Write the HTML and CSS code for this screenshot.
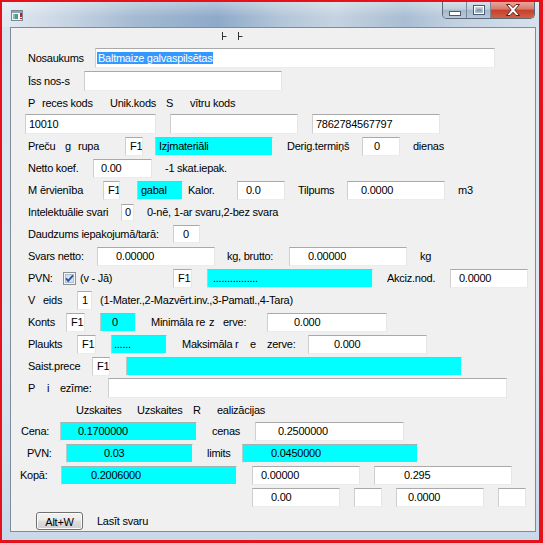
FILE: index.html
```html
<!DOCTYPE html>
<html lang="lv">

<head>
    <meta charset="UTF-8">
    <meta name="viewport" content="width=device-width, initial-scale=1.0">
    <title>Prece</title>
    <link rel="stylesheet" href="styles.css">
</head>

<body>
    <div class="screen">
        <div class="titlebar">
            <svg class="app-icon" width="13" height="11" viewBox="0 0 13 11">
                <rect x="0.5" y="0.5" width="11" height="10" fill="#f4f6f8" stroke="#7b8794" />
                <rect x="1" y="1" width="10" height="2" fill="#8fa3b8" />
                <rect x="2" y="4" width="5" height="5" fill="#4f9a86" />
                <rect x="2" y="4" width="2" height="5" fill="#7cc0a6" />
                <rect x="9" y="3" width="2" height="4" fill="#b3221c" />
                <rect x="9" y="8" width="2" height="1" fill="#b3221c" />
            </svg>
            <div class="caption-btns">
                <div class="cbtn cmin">
                    <svg width="12" height="6" viewBox="0 0 12 6"><rect x="0.5" y="1.5" width="11" height="4" fill="#fff" stroke="#4b5b6d" /></svg>
                </div>
                <div class="cbtn cmax">
                    <svg width="12" height="10" viewBox="0 0 12 10"><rect x="0.5" y="0.5" width="11" height="9" fill="none" stroke="#4b5b6d" /><rect x="1.5" y="1.5" width="9" height="7" fill="none" stroke="#fff" /><rect x="3.5" y="3.5" width="5" height="3" fill="#4b5b6d" opacity=".35" /></svg>
                </div>
                <div class="cbtn cclose">
                    <svg width="16" height="12" viewBox="0 0 16 12"><path d="M1.5 0.5h3.5l3 3.2 3-3.2h3.5l-4.7 5.5 4.7 5.5h-3.5l-3-3.2-3 3.2h-3.5l4.7-5.5z" fill="#fff" stroke="#6b1a12" stroke-width="1" /></svg>
                </div>
            </div>
        </div>

        <div class="client">
            <div class="splitter">
                <svg width="5" height="8" viewBox="0 0 5 8"><path d="M0.5 0v8M0.5 4.5h4" stroke="#333" /></svg>
                <svg width="5" height="8" viewBox="0 0 5 8"><path d="M0.5 0v8M0.5 4.5h4" stroke="#333" /></svg>
            </div>

            <div class="row">
                <span class="lbl w67">Nosaukums</span>
                <div class="fld h20 w400 pl1"><span class="sel">Baltmaize galvaspilsētas</span></div>
            </div>

            <div class="row mt1">
                <span class="lbl w56">Īss nos-s</span>
                <div class="fld h20 w198"></div>
            </div>

            <div class="row h21">
                <span class="lbl w14">P</span>
                <span class="lbl w68">reces kods</span>
                <span class="lbl w56">Unik.kods</span>
                <span class="lbl w24">S</span>
                <span class="lbl">vītru kods</span>
            </div>

            <div class="row">
                <div class="fld h20 w131 pl3 ml-3">10010</div>
                <div class="fld h20 w128 ml14"></div>
                <div class="fld h20 w128 pl3 ml14">7862784567797</div>
            </div>

            <div class="row">
                <span class="lbl w37">Preču</span>
                <span class="lbl w13">g</span>
                <span class="lbl w47">rupa</span>
                <div class="fld f1 w18">F1</div>
                <div class="fld cy w118 pl3 ml12">Izjmateriāli</div>
                <span class="lbl w75 ml14">Derig.termiņš</span>
                <div class="fld w38 pl11">0</div>
                <span class="lbl ml13">dienas</span>
            </div>

            <div class="row">
                <span class="lbl w65">Netto koef.</span>
                <div class="fld w59 pl7">0.00</div>
                <span class="lbl ml13">-1 skat.iepak.</span>
            </div>

            <div class="row">
                <span class="lbl w12">M</span>
                <span class="lbl w63">ērvienība</span>
                <div class="fld f1 w17">F1</div>
                <div class="fld cy w46 pl3 ml17">gabal</div>
                <span class="lbl w49 ml5">Kalor.</span>
                <div class="fld w48 pl8">0.0</div>
                <span class="lbl w49 ml13">Tilpums</span>
                <div class="fld w98 pl13">0.0000</div>
                <span class="lbl ml13">m3</span>
            </div>

            <div class="row">
                <span class="lbl w93">Intelektuālie svari</span>
                <div class="fld h17 w13 pl3">0</div>
                <span class="lbl ml13">0-nē, 1-ar svaru,2-bez svara</span>
            </div>

            <div class="row">
                <span class="lbl w145">Daudzums iepakojumā/tarā:</span>
                <div class="fld h18 w27 pl9">0</div>
            </div>

            <div class="row">
                <span class="lbl w69">Svars netto:</span>
                <div class="fld w118 pl18">0.00000</div>
                <span class="lbl w62 ml12">kg, brutto:</span>
                <div class="fld w118 pl18">0.00000</div>
                <span class="lbl ml13">kg</span>
            </div>

            <div class="row">
                <span class="lbl w35">PVN:</span>
                <svg class="check" width="13" height="13" viewBox="0 0 13 13">
                    <rect x="0.5" y="0.5" width="12" height="12" fill="#f6f6f6" stroke="#8e8f8f" />
                    <rect x="2.5" y="2.5" width="8" height="8" fill="#d3e2f1" stroke="#a9bfd8" />
                    <path d="M3 6.3l2.2 2.6 4.8-5.6" fill="none" stroke="#2c4f9e" stroke-width="1.8" />
                </svg>
                <span class="lbl w93 ml4">(v - Jā)</span>
                <div class="fld f1 w19">F1</div>
                <div class="fld cy w166 pl5 ml15">................</div>
                <span class="lbl w63 ml14">Akciz.nod.</span>
                <div class="fld w78 pl8">0.0000</div>
            </div>

            <div class="row">
                <span class="lbl w15">V</span>
                <span class="lbl w34">eids</span>
                <div class="fld w15 pl4">1</div>
                <span class="lbl ml8">(1-Mater.,2-Mazvērt.inv.,3-Pamatl.,4-Tara)</span>
            </div>

            <div class="row">
                <span class="lbl w38">Konts</span>
                <div class="fld f1 w19">F1</div>
                <div class="fld cy w36 pl11 ml15">0</div>
                <span class="lbl w58 ml15">Minimāla re</span>
                <span class="lbl w14">z</span>
                <span class="lbl w44">erve:</span>
                <div class="fld w120 pl26">0.000</div>
            </div>

            <div class="row">
                <span class="lbl w49">Plaukts</span>
                <div class="fld f1 w19">F1</div>
                <div class="fld cy w56 pl2 ml15">......</div>
                <span class="lbl w68 ml15">Maksimāla r</span>
                <span class="lbl w17">e</span>
                <span class="lbl w41">zerve:</span>
                <div class="fld w119 pl25">0.000</div>
            </div>

            <div class="row">
                <span class="lbl w64">Saist.prece</span>
                <div class="fld f1 w18">F1</div>
                <div class="fld cy w336 ml16"></div>
            </div>

            <div class="row">
                <span class="lbl w19">P</span>
                <span class="lbl w13">i</span>
                <span class="lbl w48">ezīme:</span>
                <div class="fld h20 w399"></div>
            </div>

            <div class="row h21">
                <span class="lbl w61 ml48">Uzskaites</span>
                <span class="lbl w56">Uzskaites</span>
                <span class="lbl w24">R</span>
                <span class="lbl">ealizācijas</span>
            </div>

            <div class="row">
                <span class="lbl w39 ml-7">Cena:</span>
                <div class="fld cy w137 pl17">0.1700000</div>
                <span class="lbl w43 ml15">cenas</span>
                <div class="fld w149 pl22">0.2500000</div>
            </div>

            <div class="row">
                <span class="lbl w39 ml-1">PVN:</span>
                <div class="fld cy w127 pl37">0.03</div>
                <span class="lbl w35 ml14">limits</span>
                <div class="fld cy w176 pl28">0.0450000</div>
            </div>

            <div class="row">
                <span class="lbl w41 ml-8">Kopā:</span>
                <div class="fld cy w176 pl29">0.2006000</div>
                <div class="fld w108 pl8 ml15">0.00000</div>
                <div class="fld w138 pl29 ml14">0.295</div>
            </div>

            <div class="row">
                <div class="fld w88 pl18 ml224">0.00</div>
                <div class="fld w28 ml14"></div>
                <div class="fld w88 pl11 ml14">0.0000</div>
                <div class="fld w28 ml14"></div>
            </div>

            <div class="row h20 mt3">
                <button class="btn ml8">Alt+W</button>
                <span class="lbl ml14">Lasīt svaru</span>
            </div>
        </div>
    </div>
</body>

</html>
```

FILE: styles.css
```css
* {
    margin: 0;
    padding: 0;
    box-sizing: border-box;
}

body {
    font: 11px "Liberation Sans", Arial, sans-serif;
    letter-spacing: -0.25px;
    color: #000;
    background: #fff;
}

.screen {
    width: 543px;
    height: 543px;
    border: solid #e5121c;
    border-width: 2px 4px 3px 2px;
    display: flex;
    flex-direction: column;
    overflow: hidden;
    background: linear-gradient(180deg, #d9e4ef 0%, #dfe8f1 60%, #c9d9e9 100%);
}

/* window caption */
.titlebar {
    height: 25px;
    flex: none;
    display: flex;
    align-items: flex-start;
    background:
        linear-gradient(180deg, rgba(255, 255, 255, .35) 0%, rgba(255, 255, 255, 0) 60%),
        linear-gradient(90deg, #e3eaf2 0%, #c7d5e3 12%, #a3bad2 25%, #8eaac9 40%, #b3c6d9 52%, #c5d3e1 62%, #a9bed3 75%, #c3d2e1 85%, #d6e1ec 100%);
}

.app-icon {
    margin: 8px 0 0 9px;
}

.caption-btns {
    margin-left: auto;
    margin-right: 4px;
    display: flex;
    height: 17px;
    border: 1px solid #5a6878;
    border-top: none;
    border-radius: 0 0 5px 5px;
    overflow: hidden;
}

.cbtn {
    height: 100%;
    display: flex;
    align-items: center;
    justify-content: center;
}

.cmin,
.cmax {
    width: 24px;
    background: linear-gradient(180deg, #d5e0ea 0%, #c0cfdd 45%, #a6b9cc 50%, #b6c8da 100%);
    border-right: 1px solid #7a8899;
}

.cmin svg {
    margin-top: 5px;
}

.cclose {
    width: 43px;
    background: linear-gradient(180deg, #e7a89b 0%, #d9796a 45%, #c4402c 50%, #d2603f 100%);
}

/* form area */
.client {
    flex: 1;
    margin: 0 3px 8px 8px;
    border: 1px solid #7f8b98;
    background: #f0f0f0;
    display: flex;
    flex-direction: column;
    overflow: hidden;
}

.splitter {
    height: 19px;
    flex: none;
    display: flex;
    gap: 11px;
    padding: 4px 0 0 211px;
}

.row {
    display: flex;
    align-items: center;
    height: 22px;
    flex: none;
    padding-left: 17px;
}

.lbl {
    flex: none;
    white-space: nowrap;
}

.fld {
    flex: none;
    height: 19px;
    line-height: 17px;
    white-space: nowrap;
    overflow: hidden;
    background: #fff;
    border: 1px solid;
    border-color: #a9a9a9 #e6e6e6 #ececec #cfcfcf;
}

.fld.cy {
    background: #00ffff;
    border-color: #a3b3b3 #e6f6f6 #f0f0f0 #b8cccc;
}

.fld.f1 {
    padding-left: 4px;
}

.sel {
    background: #3399ff;
    color: #fff;
    padding: 0 1px;
}

.check {
    flex: none;
}

.btn {
    flex: none;
    width: 47px;
    height: 18px;
    font: inherit;
    letter-spacing: inherit;
    color: #000;
    border: 1px solid #707070;
    border-radius: 3px;
    background: linear-gradient(180deg, #f2f2f2 0%, #ebebeb 45%, #dddddd 50%, #cfcfcf 100%);
    box-shadow: inset 0 0 0 1px #fcfcfc;
}

/* row heights */
.h17 { height: 17px; line-height: 15px; }
.h18 { height: 18px; line-height: 16px; }
.h20 { height: 20px; line-height: 18px; }
.row.h20 { height: 20px; }
.row.h21 { height: 21px; }
.mt1 { margin-top: 1px; }
.mt3 { margin-top: 3px; }

/* widths */
.w12 { width: 12px; }
.w13 { width: 13px; }
.w14 { width: 14px; }
.w15 { width: 15px; }
.w17 { width: 17px; }
.w18 { width: 18px; }
.w19 { width: 19px; }
.w24 { width: 24px; }
.w27 { width: 27px; }
.w28 { width: 28px; }
.w34 { width: 34px; }
.w35 { width: 35px; }
.w36 { width: 36px; }
.w37 { width: 37px; }
.w38 { width: 38px; }
.w39 { width: 39px; }
.w41 { width: 41px; }
.w43 { width: 43px; }
.w44 { width: 44px; }
.w46 { width: 46px; }
.w47 { width: 47px; }
.w48 { width: 48px; }
.w49 { width: 49px; }
.w56 { width: 56px; }
.w58 { width: 58px; }
.w59 { width: 59px; }
.w61 { width: 61px; }
.w62 { width: 62px; }
.w63 { width: 63px; }
.w64 { width: 64px; }
.w65 { width: 65px; }
.w67 { width: 67px; }
.w68 { width: 68px; }
.w69 { width: 69px; }
.w75 { width: 75px; }
.w78 { width: 78px; }
.w88 { width: 88px; }
.w93 { width: 93px; }
.w98 { width: 98px; }
.w108 { width: 108px; }
.w118 { width: 118px; }
.w119 { width: 119px; }
.w120 { width: 120px; }
.w127 { width: 127px; }
.w128 { width: 128px; }
.w131 { width: 131px; }
.w137 { width: 137px; }
.w138 { width: 138px; }
.w145 { width: 145px; }
.w149 { width: 149px; }
.w166 { width: 166px; }
.w176 { width: 176px; }
.w198 { width: 198px; }
.w336 { width: 336px; }
.w399 { width: 399px; }
.w400 { width: 400px; }

/* left gaps */
.ml-8 { margin-left: -8px; }
.ml-7 { margin-left: -7px; }
.ml-3 { margin-left: -3px; }
.ml-1 { margin-left: -1px; }
.ml4 { margin-left: 4px; }
.ml5 { margin-left: 5px; }
.ml8 { margin-left: 8px; }
.ml12 { margin-left: 12px; }
.ml13 { margin-left: 13px; }
.ml14 { margin-left: 14px; }
.ml15 { margin-left: 15px; }
.ml16 { margin-left: 16px; }
.ml17 { margin-left: 17px; }
.ml48 { margin-left: 48px; }
.ml224 { margin-left: 224px; }

/* text indents inside fields */
.pl1 { padding-left: 1px; }
.pl2 { padding-left: 2px; }
.pl3 { padding-left: 3px; }
.pl4 { padding-left: 4px; }
.pl5 { padding-left: 5px; }
.pl7 { padding-left: 7px; }
.pl8 { padding-left: 8px; }
.pl9 { padding-left: 9px; }
.pl11 { padding-left: 11px; }
.pl13 { padding-left: 13px; }
.pl17 { padding-left: 17px; }
.pl18 { padding-left: 18px; }
.pl22 { padding-left: 22px; }
.pl25 { padding-left: 25px; }
.pl26 { padding-left: 26px; }
.pl28 { padding-left: 28px; }
.pl29 { padding-left: 29px; }
.pl37 { padding-left: 37px; }
```
